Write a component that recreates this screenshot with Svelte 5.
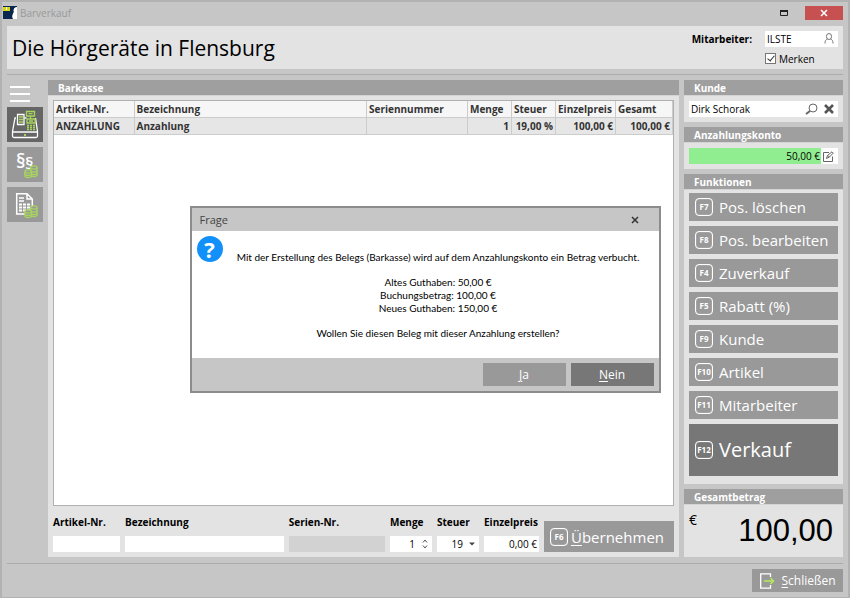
<script>
  let employee = $state('ILSTE');
  let remember = $state(true);
  let customer = $state('Dirk Schorak');
  let quantity = $state(1);
  let tax = $state('19');
  let price = $state('0,00 €');

  const rows = [
    { nr: 'ANZAHLUNG', name: 'Anzahlung', serial: '', qty: 1, tax: '19,00 %', price: '100,00 €', total: '100,00 €' }
  ];

  const actions = [
    { key: 'F7', label: 'Pos. löschen' },
    { key: 'F8', label: 'Pos. bearbeiten' },
    { key: 'F4', label: 'Zuverkauf' },
    { key: 'F5', label: 'Rabatt (%)' },
    { key: 'F9', label: 'Kunde' },
    { key: 'F10', label: 'Artikel' },
    { key: 'F11', label: 'Mitarbeiter' },
    { key: 'F12', label: 'Verkauf', main: true }
  ];
</script>

{#snippet fkey(name)}
  <span class="fkey">{name}</span>
{/snippet}

{#snippet coins()}
  <g fill="#999" stroke="#a8d65c" stroke-width="1.3">
    <path d="M23.500 21v7c0 2 6.500 2 6.500 0v-7" />
    <ellipse cx="26.800" cy="20.500" rx="3.200" ry="1.600" />
    <path d="M23.500 23.500c0 2 6.500 2 6.500 0M23.500 26c0 2 6.500 2 6.500 0" fill="none" />
    <path d="M18 24.500v4.500c0 2 6.500 2 6.500 0v-4.500" />
    <ellipse cx="21.200" cy="24.500" rx="3.200" ry="1.600" />
    <path d="M18 27c0 2 6.500 2 6.500 0" fill="none" />
  </g>
{/snippet}

<div class="window">
  <div class="titlebar">
    <svg class="logo" viewBox="0 0 14 14" width="14" height="14">
      <path d="M0 0h14v1c-3 1-4 3-3 5-1 2-2 3-2 5l1 2H0z" fill="#08264f" />
      <path d="M14 1c-3 0-4 3-3 5-2 3-1 5-1 7h4z" fill="#fff" />
      <path d="M0 1h7v4H0z" fill="#d8d511" />
      <path d="M3 1h1v3H3z" fill="#fff" />
    </svg>
    <span class="caption">Barverkauf</span>
    <button class="max" aria-label="Maximieren">
      <svg viewBox="0 0 8 6" width="8" height="6"><path d="M.5 1h7v4.500h-7z" fill="none" stroke="#222" /><path d="M0 0h8v2H0z" fill="#222" /></svg>
    </button>
    <button class="close" aria-label="Fenster schließen">
      <svg viewBox="0 0 8 8" width="8" height="8"><path d="M1 1l6 6M7 1L1 7" stroke="#fff" stroke-width="1.600" /></svg>
    </button>
  </div>

  <header>
    <h1>Die Hörgeräte in Flensburg</h1>
    <div class="login">
      <label class="strong" for="employee">Mitarbeiter:</label>
      <div class="field">
        <input id="employee" bind:value={employee} />
        <svg viewBox="0 0 10 11" width="10" height="11" fill="none" stroke="#777"><ellipse cx="5" cy="3.500" rx="2.600" ry="3" /><path d="M1 10.500c0-3 1-4 2.500-4.500M9 10.500c0-3-1-4-2.500-4.500" /></svg>
      </div>
      <label class="remember"><input type="checkbox" bind:checked={remember} />Merken</label>
    </div>
  </header>

  <main>
    <nav>
      <button class="menu" aria-label="Menü"><span></span><span></span><span></span></button>
      <button class="tile active" aria-label="Barkasse">
        <svg viewBox="0 0 36 35" width="36" height="35" fill="none" stroke="#fff" stroke-width="1.300">
          <path d="M9 11H8L5.500 24.500V29q0 1.500 1.500 1.500h22q1.500 0 1.500-1.500v-4.500L28.500 11M5.500 25h25M17.500 11h2" />
          <path d="M10.500 7.500h6.500v10h-6.500z" />
          <g stroke="#a8d65c">
            <path d="M12 10h4M12 12.500h4M12 15h4" />
            <path d="M19.500 4.500h8v4.500h-8zM21.500 6.700h4M23.500 9v3M20 12h8v4h-8zM22 14h4" />
            <path d="M20 18.500h8M20 20.500h8M20 22.500h8" stroke-dasharray="2 1" />
            <path d="M17 28h2" stroke-width="2" />
          </g>
        </svg>
      </button>
      <button class="tile" aria-label="Rechtliches">
        <svg viewBox="0 0 36 35" width="36" height="35">
          <text x="9" y="21" font-size="19" font-weight="600" fill="#fff">§</text>
          <text x="18" y="22" font-size="17" font-weight="600" fill="#fff">§</text>
          {@render coins()}
        </svg>
      </button>
      <button class="tile" aria-label="Abrechnung">
        <svg viewBox="0 0 36 35" width="36" height="35" fill="none" stroke="#fff" stroke-width="1.500">
          <path d="M9.700 6.700H20l5.300 5.300v15H9.700zM20 6.700V12h5.300" />
          <path d="M12 11h5M12 14h5" />
          <path d="M12 17.500h11M12 20.500h11M12 23.500h11" stroke-dasharray="3 1" stroke-width="1.800" />
          {@render coins()}
        </svg>
      </button>
    </nav>

    <section class="panel sale">
      <h2>Barkasse</h2>
      <div class="body">
        <div class="list">
          <table>
            <colgroup>
              <col class="c-nr" /><col /><col class="c-serial" /><col class="c-qty" /><col class="c-qty" /><col class="c-price" /><col class="c-total" />
            </colgroup>
            <thead>
              <tr>
                <th>Artikel-Nr.</th><th>Bezeichnung</th><th>Seriennummer</th><th>Menge</th><th>Steuer</th><th>Einzelpreis</th><th>Gesamt</th>
              </tr>
            </thead>
            <tbody>
              {#each rows as row}
                <tr>
                  <td>{row.nr}</td>
                  <td>{row.name}</td>
                  <td>{row.serial}</td>
                  <td class="num">{row.qty}</td>
                  <td class="num">{row.tax}</td>
                  <td class="num">{row.price}</td>
                  <td class="num">{row.total}</td>
                </tr>
              {/each}
            </tbody>
          </table>
        </div>

        <form class="entry" onsubmit={(e) => e.preventDefault()}>
          <div class="group nr">
            <label class="strong" for="nr">Artikel-Nr.</label>
            <div class="field"><input id="nr" /></div>
          </div>
          <div class="group name">
            <label class="strong" for="name">Bezeichnung</label>
            <div class="field"><input id="name" /></div>
          </div>
          <div class="group serial">
            <label class="strong" for="serial">Serien-Nr.</label>
            <div class="field off"><input id="serial" disabled /></div>
          </div>
          <div class="group small">
            <label class="strong" for="qty">Menge</label>
            <div class="field">
              <input id="qty" class="num" bind:value={quantity} />
              <span class="spin">
                <button type="button" aria-label="Mehr" onclick={() => quantity++}><svg viewBox="0 0 6 4" width="6" height="4"><path d="M1 3.500l2-2.500 2 2.500" fill="none" stroke="#555" /></svg></button>
                <button type="button" aria-label="Weniger" onclick={() => quantity--}><svg viewBox="0 0 6 4" width="6" height="4"><path d="M1 .5L3 3l2-2.500" fill="none" stroke="#555" /></svg></button>
              </span>
            </div>
          </div>
          <div class="group small">
            <label class="strong" for="tax">Steuer</label>
            <div class="field">
              <select id="tax" bind:value={tax}>
                <option>19</option>
                <option>7</option>
              </select>
              <svg viewBox="0 0 6 4" width="6" height="4"><path d="M0 .5h6L3 3.500z" fill="#444" /></svg>
            </div>
          </div>
          <div class="group price">
            <label class="strong" for="price">Einzelpreis</label>
            <div class="field"><input id="price" class="num" bind:value={price} /></div>
          </div>
          <button class="action accept">{@render fkey('F6')}<span><u>Ü</u>bernehmen</span></button>
        </form>
      </div>
    </section>

    <aside>
      <section class="panel">
        <h2><label for="customer">Kunde</label></h2>
        <div class="body">
          <div class="field">
            <input id="customer" bind:value={customer} />
            <button class="icon" aria-label="Kunde suchen">
              <svg viewBox="0 0 13 13" width="13" height="13" fill="none" stroke="#666"><circle cx="8" cy="5" r="4" /><path d="M5 8l-4 3" stroke-width="2" /></svg>
            </button>
            <button class="icon" aria-label="Kunde entfernen">
              <svg viewBox="0 0 10 10" width="10" height="10"><path d="M1 1l8 8M9 1L1 9" stroke="#555" stroke-width="2.600" /></svg>
            </button>
          </div>
        </div>
      </section>

      <section class="panel">
        <h2>Anzahlungskonto</h2>
        <div class="body">
          <div class="field account">
            <output>50,00 €</output>
            <button class="icon" aria-label="Konto bearbeiten">
              <svg viewBox="0 0 11 11" width="11" height="11" fill="none" stroke="#666"><path d="M6 1.500H.5v9h9V5.500" /><path d="M3.500 7.500l1-3L9 .8l1.300 1.300-4 4zM4.500 4.500l2 1.500" /></svg>
            </button>
          </div>
        </div>
      </section>

      <section class="panel functions">
        <h2>Funktionen</h2>
        <div class="body">
          {#each actions as { key, label, main }}
            <button class="action" class:main>{@render fkey(key)}<span>{label}</span></button>
          {/each}
        </div>
      </section>

      <section class="panel">
        <h2>Gesamtbetrag</h2>
        <div class="body sum">
          <span class="currency">€</span>
          <span class="amount">100,00</span>
        </div>
      </section>
    </aside>
  </main>

  <footer>
    <button class="leave">
      <svg viewBox="0 0 16 16" width="16" height="16" fill="none"><path d="M11.500 4V.8H1.700v14.400h9.800V12" stroke="#fff" stroke-width="1.300" /><path d="M5 8h9M11.500 5L14.500 8l-3 3" stroke="#b4ea5c" stroke-width="1.500" /></svg>
      <span><u>S</u>chließen</span>
    </button>
  </footer>

  <div class="overlay">
    <div class="dialog" role="dialog" aria-labelledby="dialog-title">
      <div class="dialog-title">
        <span id="dialog-title">Frage</span>
        <button class="icon" aria-label="Dialog schließen">
          <svg viewBox="0 0 8 8" width="8" height="8"><path d="M1 1l6 6M7 1L1 7" stroke="#333" stroke-width="1.500" /></svg>
        </button>
      </div>
      <div class="dialog-body">
        <span class="question">?</span>
        <div class="message">
          <p>Mit der Erstellung des Belegs (Barkasse) wird auf dem Anzahlungskonto ein Betrag verbucht.</p>
          <p>Altes Guthaben: 50,00 €<br />Buchungsbetrag: 100,00 €<br />Neues Guthaben: 150,00 €</p>
          <p>Wollen Sie diesen Beleg mit dieser Anzahlung erstellen?</p>
        </div>
      </div>
      <div class="dialog-buttons">
        <button><span><u>J</u>a</span></button>
        <button class="default"><span><u>N</u>ein</span></button>
      </div>
    </div>
  </div>
</div>

<style>
  :global(body) {
    margin: 0;
  }
  .window {
    position: relative;
    box-sizing: border-box;
    min-height: 100vh;
    display: flex;
    flex-direction: column;
    padding: 0 5px;
    border: 2px solid #b2b2b2;
    background: #c6c6c6;
    color: #000;
    font-family: 'Open Sans', 'Noto Sans', sans-serif;
    font-size: 10px;
    line-height: 16px;
  }
  button,
  input,
  select {
    box-sizing: border-box;
    margin: 0;
    padding: 0;
    border: 0;
    background: none;
    color: inherit;
    font: inherit;
  }
  button {
    display: flex;
    align-items: center;
    justify-content: center;
  }
  svg {
    display: block;
    flex: none;
  }
  h1,
  h2,
  p {
    margin: 0;
  }
  u {
    text-underline-offset: 2px;
    text-decoration-thickness: 1px;
  }

  .titlebar {
    display: flex;
    align-items: flex-start;
    height: 20px;
    margin-left: -4px;
    padding-top: 4px;
  }
  .caption {
    flex: 1;
    margin-left: 3px;
    color: #999;
    font-size: 10px;
    line-height: 14px;
  }
  .max,
  .close {
    width: 38px;
    height: 14px;
  }
  .max {
    width: 42px;
  }
  .close {
    background: #c75050;
  }

  header {
    display: flex;
    align-items: center;
    justify-content: space-between;
    height: 43px;
    padding: 0 5px;
    background: #e3e3e3;
  }
  h1 {
    font-size: 21px;
    font-weight: 400;
    line-height: 30px;
  }
  .login {
    display: grid;
    grid-template-columns: auto 73px;
    gap: 4px 13px;
    padding-top: 2px;
  }
  .strong {
    font-weight: 700;
  }
  .remember {
    grid-column: 2;
    display: flex;
    align-items: center;
    gap: 3px;
  }
  .remember input {
    appearance: none;
    display: flex;
    justify-content: center;
    width: 11px;
    height: 11px;
    border: 1px solid #777;
    background: #fff;
  }
  .remember input:checked::after {
    content: '';
    width: 3px;
    height: 6px;
    border: solid #333;
    border-width: 0 1px 1px 0;
    transform: rotate(40deg);
  }

  .field {
    display: flex;
    align-items: center;
    box-sizing: border-box;
    height: 16px;
    padding-right: 4px;
    background: #fff;
  }
  .field input {
    flex: 1;
    width: 100%;
    min-width: 0;
    height: 16px;
    padding: 0 2px;
  }
  .field.off {
    background: #d2d2d2;
  }
  .num {
    text-align: right;
  }

  main {
    flex: 1;
    display: grid;
    grid-template-columns: 36px minmax(0, 1fr) 159px;
    gap: 5px;
    margin-top: 5px;
    padding: 5px 0 6px;
    border: solid #ababab;
    border-width: 1px 0;
  }
  nav {
    display: flex;
    flex-direction: column;
    gap: 5px;
  }
  .menu {
    flex-direction: column;
    gap: 5px;
    width: 26px;
    height: 22px;
    padding-top: 5px;
  }
  .menu span {
    width: 20px;
    height: 2px;
    background: #fff;
  }
  .tile {
    height: 35px;
    background: #999;
  }
  .tile.active {
    background: #666;
  }

  .panel {
    display: flex;
    flex-direction: column;
  }
  h2 {
    box-sizing: border-box;
    height: 16px;
    padding-left: 10px;
    border-bottom: 1px solid #d4d4d4;
    background: #9f9f9f;
    color: #fff;
    font-size: 10px;
    font-weight: 700;
    line-height: 16px;
  }
  .body {
    flex: 1;
    padding: 5px;
    background: #e3e3e3;
  }
  aside {
    display: flex;
    flex-direction: column;
    gap: 5px;
  }

  .sale .body {
    display: flex;
    flex-direction: column;
    gap: 8px;
    padding-top: 4px;
  }
  .list {
    flex: 1;
    border: 1px solid #b0b0b0;
    background: #fff;
  }
  table {
    width: 100%;
    table-layout: fixed;
    border-collapse: collapse;
    color: #333;
    font-weight: 700;
  }
  th,
  td {
    height: 16px;
    padding: 0 2px;
    border: solid #ccc;
    border-width: 0 1px 1px 0;
    background: #e6e6e6;
    white-space: nowrap;
  }
  th {
    background: #f6f6f6;
    text-align: left;
  }
  .c-nr {
    width: 80px;
  }
  .c-serial {
    width: 101px;
  }
  .c-qty {
    width: 44px;
  }
  .c-price {
    width: 60px;
  }
  .c-total {
    width: 57px;
  }

  .entry {
    display: flex;
    align-items: flex-end;
    gap: 5px;
  }
  .group {
    display: flex;
    flex-direction: column;
    gap: 6px;
  }
  .group.nr {
    width: 67px;
  }
  .group.name {
    flex: 160;
  }
  .group.serial {
    flex: 97;
  }
  .group.small {
    width: 42px;
  }
  .group.price {
    width: 55px;
  }
  .price .field {
    padding-right: 0;
  }
  .spin {
    display: flex;
    flex-direction: column;
    gap: 2px;
    margin-left: 5px;
  }
  select {
    appearance: none;
    flex: 1;
    min-width: 0;
    height: 16px;
    padding-right: 6px;
    text-align: right;
  }

  .action {
    justify-content: flex-start;
    gap: 6px;
    height: 28px;
    padding-left: 6px;
    background: #999;
    color: #fff;
    font-size: 15px;
    line-height: 24px;
  }
  .accept {
    width: 130px;
    height: 31px;
    gap: 3px;
  }
  .functions .body {
    display: flex;
    flex-direction: column;
    gap: 5px;
    padding: 3px 5px 8px;
  }
  .action.main {
    height: 52px;
    background: #777;
    font-size: 20px;
  }
  .fkey {
    flex: none;
    box-sizing: border-box;
    width: 18px;
    height: 18px;
    border: 1px solid #fff;
    border-radius: 4px;
    box-shadow: inset 0 0 1px #fff;
    font-size: 8px;
    font-weight: 700;
    line-height: 16px;
    text-align: center;
  }

  .icon {
    margin-left: 6px;
  }
  .account output {
    flex: 1;
    padding-right: 1px;
    background: #90ee90;
    text-align: right;
  }
  .account .icon {
    margin-left: 2px;
  }
  .functions {
    flex: 1;
  }
  .sum {
    display: flex;
    justify-content: space-between;
    height: 40px;
  }
  .currency {
    font-size: 14px;
    line-height: 20px;
  }
  .amount {
    padding-right: 5px;
    font-family: 'Liberation Sans', Arial, sans-serif;
    font-size: 31px;
    line-height: 42px;
  }

  footer {
    display: flex;
    justify-content: flex-end;
    padding: 5px 0;
  }
  .leave {
    gap: 6px;
    width: 91px;
    height: 23px;
    background: #999;
    color: #fff;
    font-size: 12px;
  }

  .overlay {
    position: absolute;
    inset: 0;
    display: flex;
    align-items: center;
    justify-content: center;
  }
  .dialog {
    box-sizing: border-box;
    width: 471px;
    border: 2px solid #8c8c8c;
    background: #c6c6c6;
  }
  .dialog-title {
    display: flex;
    align-items: center;
    justify-content: space-between;
    height: 23px;
    padding: 0 20px 0 8px;
    color: #444;
    font-size: 11px;
  }
  .dialog-body {
    display: flex;
    height: 127px;
    background: #fff;
  }
  .question {
    flex: none;
    width: 26px;
    height: 26px;
    margin: 5px;
    border-radius: 50%;
    background: #1090f8;
    color: #fff;
    font-size: 22px;
    font-weight: 700;
    line-height: 26px;
    text-align: center;
  }
  .message {
    flex: 1;
    display: flex;
    flex-direction: column;
    gap: 12px;
    padding: 20px 10px 0 0;
    font-family: Lato, 'Open Sans', sans-serif;
    line-height: 13px;
    text-align: center;
    white-space: nowrap;
  }
  .dialog-buttons {
    display: flex;
    justify-content: flex-end;
    gap: 5px;
    padding: 5px;
  }
  .dialog-buttons button {
    width: 83px;
    height: 23px;
    background: #999;
    color: #fff;
    font-size: 12px;
  }
  .dialog-buttons .default {
    background: #777;
  }
</style>
